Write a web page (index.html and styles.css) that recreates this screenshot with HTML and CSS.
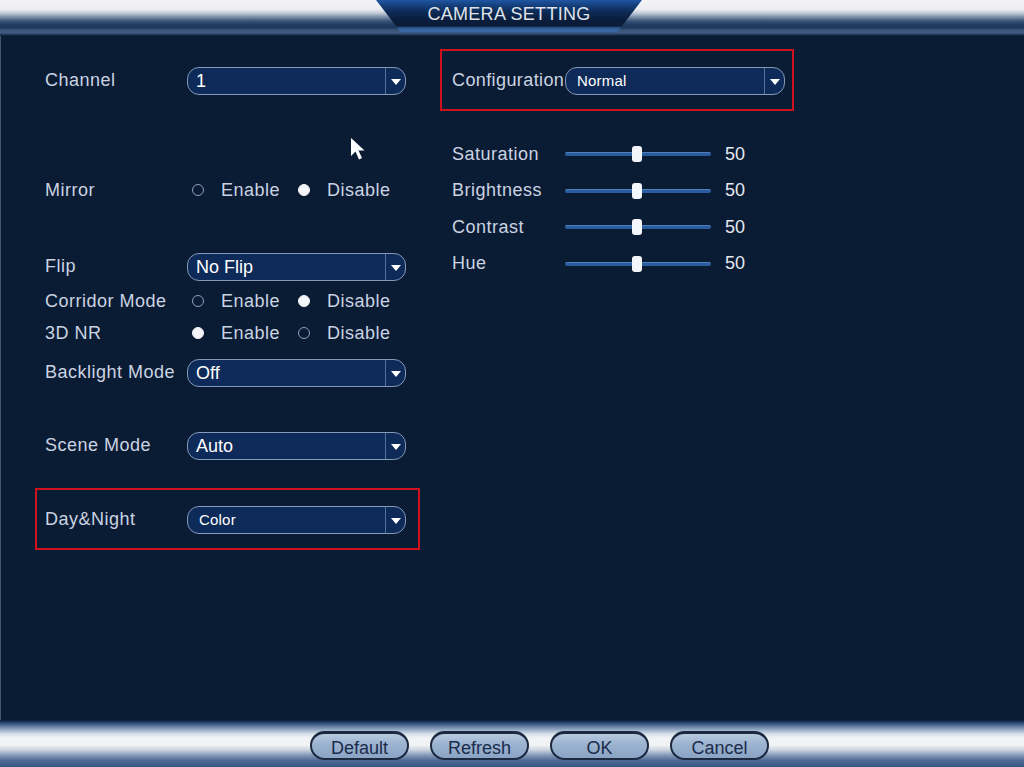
FILE: index.html
```html
<!DOCTYPE html>
<html lang="en">
<head>
<meta charset="utf-8">
<title>Camera Setting</title>
<link rel="stylesheet" href="styles.css">
</head>
<body>
<div class="screen">
  <header class="topbar">
    <div class="tab"><span class="tab-title">CAMERA SETTING</span></div>
  </header>

  <main class="content">
    <section class="col-left">
      <div class="row">
        <span class="label">Channel</span>
        <div class="select"><span class="val">1</span><span class="arrow"></span></div>
      </div>

      <div class="row gap-mirror">
        <span class="label label-radio">Mirror</span>
        <span class="radio"></span><span class="opt">Enable</span>
        <span class="radio on second"></span><span class="opt">Disable</span>
      </div>

      <div class="row gap-flip">
        <span class="label">Flip</span>
        <div class="select"><span class="val">No Flip</span><span class="arrow"></span></div>
      </div>

      <div class="row gap-corridor">
        <span class="label label-radio">Corridor Mode</span>
        <span class="radio"></span><span class="opt">Enable</span>
        <span class="radio on second"></span><span class="opt">Disable</span>
      </div>

      <div class="row gap-nr">
        <span class="label label-radio">3D NR</span>
        <span class="radio on"></span><span class="opt">Enable</span>
        <span class="radio second"></span><span class="opt">Disable</span>
      </div>

      <div class="row gap-backlight">
        <span class="label">Backlight Mode</span>
        <div class="select"><span class="val">Off</span><span class="arrow"></span></div>
      </div>

      <div class="row gap-scene">
        <span class="label">Scene Mode</span>
        <div class="select"><span class="val">Auto</span><span class="arrow"></span></div>
      </div>

      <div class="highlight hl-left">
        <div class="row">
          <span class="label">Day&amp;Night</span>
          <div class="select"><span class="val small">Color</span><span class="arrow"></span></div>
        </div>
      </div>
    </section>

    <section class="col-right">
      <div class="highlight hl-right">
        <div class="row">
          <span class="label label-config">Configuration</span>
          <div class="select select-config"><span class="val small">Normal</span><span class="arrow"></span></div>
        </div>
      </div>

      <div class="sliders">
        <div class="slider-row">
          <span class="label label-slider">Saturation</span>
          <div class="track"><span class="thumb"></span></div>
          <span class="num">50</span>
        </div>
        <div class="slider-row">
          <span class="label label-slider">Brightness</span>
          <div class="track"><span class="thumb"></span></div>
          <span class="num">50</span>
        </div>
        <div class="slider-row">
          <span class="label label-slider">Contrast</span>
          <div class="track"><span class="thumb"></span></div>
          <span class="num">50</span>
        </div>
        <div class="slider-row">
          <span class="label label-slider">Hue</span>
          <div class="track"><span class="thumb"></span></div>
          <span class="num">50</span>
        </div>
      </div>
    </section>

    <svg class="cursor" width="18" height="25" viewBox="0 0 18 25" aria-hidden="true">
      <path d="M1 1 L1 19 L5.5 14.5 L9 22.5 L12 21 L8.5 13.5 L14.5 13.5 Z" fill="#ffffff"/>
    </svg>
  </main>

  <footer class="bottombar">
    <button class="btn">Default</button>
    <button class="btn">Refresh</button>
    <button class="btn">OK</button>
    <button class="btn">Cancel</button>
  </footer>
</div>
</body>
</html>
```

FILE: styles.css
```css
* { box-sizing: border-box; }

html, body {
  margin: 0;
  padding: 0;
  background: #0a1c34;
}

.screen {
  width: 1024px;
  height: 767px;
  display: flex;
  flex-direction: column;
  overflow: hidden;
  font-family: "Liberation Sans", Arial, sans-serif;
  color: #cbd3e2;
}

/* ---------- top bar ---------- */
.topbar {
  height: 36px;
  flex: none;
  position: relative;
  background: linear-gradient(to bottom,
    #f4f4f6 0px, #eceef2 9px, #c4ccd8 13px, #7b8fa9 17px,
    #3a5578 21px, #1f3a60 25px, #1d3860 28px, #3b5578 30px,
    #3f5a7e 33px, #0a1c34 36px);
  display: flex;
  justify-content: center;
  padding-right: 6px;
}

.tab {
  width: 266px;
  height: 33px;
  clip-path: polygon(0 0, 100% 0, 90.5% 100%, 9.5% 100%);
  background: linear-gradient(to bottom,
    #1f56a3 0px, #15417f 5px, #0d2a55 12px, #0a1d3c 20px,
    #0b1c38 26px, #2d5a95 28px, #3d6aa6 31px, #2c5486 33px);
  display: flex;
  justify-content: center;
  padding-top: 3px;
}

.tab-title {
  font-size: 18px;
  letter-spacing: 0.3px;
  color: #dfe3ea;
  line-height: 22px;
}

/* ---------- content ---------- */
.content {
  flex: 1;
  position: relative;
  display: flex;
  padding-top: 13px;
  border-left: 1px solid #43556f;
}

.col-left {
  width: 375px;
  margin-left: 44px;
  margin-top: 18px;
  display: flex;
  flex-direction: column;
}

.col-right {
  margin-left: 20px;
  display: flex;
  flex-direction: column;
}

.row {
  height: 28px;
  display: flex;
  align-items: center;
}

.gap-mirror { margin-top: 81px; }
.gap-flip { margin-top: 49px; }
.gap-corridor { margin-top: 6px; }
.gap-nr { margin-top: 4px; }
.gap-backlight { margin-top: 12px; }
.gap-scene { margin-top: 45px; }

.label {
  width: 142px;
  flex: none;
  font-size: 18px;
  letter-spacing: 0.5px;
  white-space: nowrap;
  color: #cbd3e2;
  line-height: 22px;
  margin-top: -3px;
}

.label-radio { margin-top: 0; }

/* ---------- select ---------- */
.select {
  width: 219px;
  height: 28px;
  flex: none;
  display: flex;
  border: 1.5px solid #8599b9;
  border-radius: 12px;
  background: #0e2a58;
  overflow: hidden;
}

.val {
  flex: 1;
  padding-left: 8px;
  font-size: 18px;
  color: #ffffff;
  line-height: 26px;
}

.val.small {
  font-size: 15px;
  padding-left: 11px;
  letter-spacing: 0.2px;
}

.arrow {
  width: 20px;
  flex: none;
  border-left: 1px solid #55709b;
  display: flex;
  align-items: center;
  justify-content: center;
}

.arrow::after {
  content: "";
  width: 0;
  height: 0;
  border-left: 5px solid transparent;
  border-right: 5px solid transparent;
  border-top: 6px solid #ffffff;
  margin-top: 1px;
}

/* ---------- radios ---------- */
.radio {
  width: 12px;
  height: 12px;
  flex: none;
  border-radius: 50%;
  border: 1.5px solid #8aa0c2;
  margin-left: 5px;
}

.radio.on {
  background: #f3f5f9;
  border-color: #f3f5f9;
}

.radio.second { margin-left: 18px; }

.opt {
  margin-left: 17px;
  font-size: 18px;
  letter-spacing: 0.5px;
  line-height: 22px;
  color: #cbd3e2;
}

/* ---------- highlight boxes ---------- */
.highlight {
  border: 2px solid #d0121c;
}

.hl-left {
  margin-top: 28px;
  margin-left: -10px;
  width: 385px;
  padding: 16px 12px 14px 8px;
}

.hl-right {
  width: 354px;
  padding: 16px 7px 14px 10px;
}

.label-config { width: 113px; letter-spacing: 0.4px; }
.select-config { width: 220px; }

/* ---------- sliders ---------- */
.sliders {
  margin-top: 31px;
  padding-left: 12px;
  display: flex;
  flex-direction: column;
  gap: 12.5px;
}

.slider-row {
  height: 24px;
  display: flex;
  align-items: center;
}

.label-slider { width: 113px; margin-top: -1px; }

.track {
  width: 146px;
  height: 4px;
  position: relative;
  background: #2b5c9e;
  border-top: 1px solid #4f7fbd;
  border-radius: 2px;
}

.thumb {
  position: absolute;
  left: 67px;
  top: -7px;
  width: 10px;
  height: 16px;
  border-radius: 3px;
  background: #f4f6fa;
}

.num {
  margin-left: 14px;
  font-size: 18px;
  color: #e4e8ef;
  line-height: 22px;
  margin-top: -1px;
}

/* ---------- cursor ---------- */
.cursor {
  position: absolute;
  left: 349px;
  top: 101px;
}

/* ---------- bottom bar ---------- */
.bottombar {
  height: 47px;
  flex: none;
  display: flex;
  align-items: center;
  gap: 21px;
  padding-left: 310px;
  padding-top: 3px;
  background: linear-gradient(to bottom,
    #0a1c34 0px, #2a4a75 3px, #8aa0be 9px, #d8e0ea 14px,
    #f2f3f5 18px, #f2f3f5 25px, #c9d3df 30px, #7b92b2 36px,
    #4c6893 41px, #3a5682 47px);
}

.btn {
  width: 99px;
  height: 29px;
  border-radius: 15px;
  border: 2px solid #1b2a40;
  border-top-width: 3px;
  background: linear-gradient(to bottom, #b8cadf 0%, #9db4d0 40%, #8aa3c4 100%);
  font-family: "Liberation Sans", Arial, sans-serif;
  font-size: 18px;
  color: #1a2b4c;
  padding: 0;
  line-height: 22px;
  padding-top: 3px;
}
```
